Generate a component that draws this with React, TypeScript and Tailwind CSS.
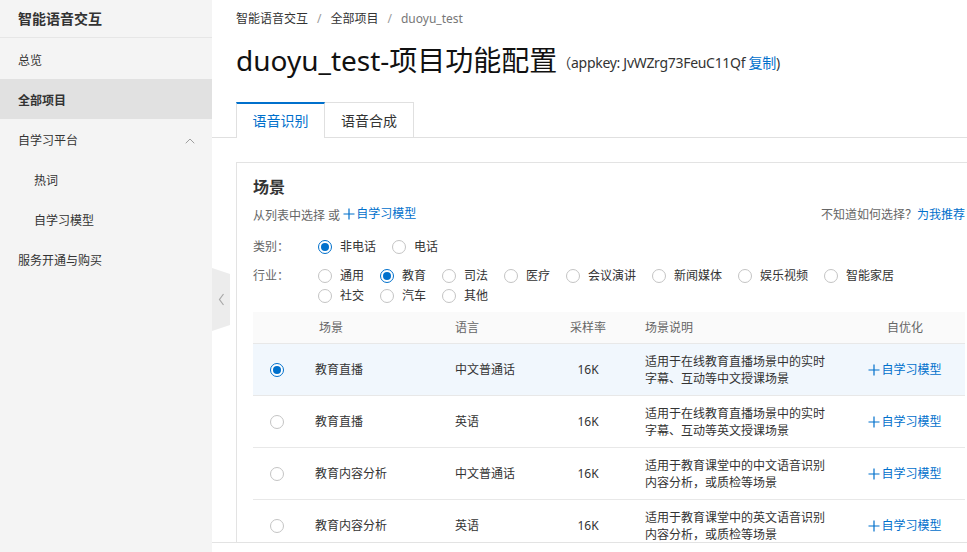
import { ChevronUp } from "lucide-react";

const font = {
	fontFamily: '"Noto Sans", "Noto Sans CJK SC", sans-serif',
};

const industries = [
	"通用",
	"教育",
	"司法",
	"医疗",
	"会议演讲",
	"新闻媒体",
	"娱乐视频",
	"智能家居",
	"社交",
	"汽车",
	"其他",
];

const rows = [
	{
		name: "教育直播",
		lang: "中文普通话",
		desc: "适用于在线教育直播场景中的实时字幕、互动等中文授课场景",
		selected: true,
	},
	{
		name: "教育直播",
		lang: "英语",
		desc: "适用于在线教育直播场景中的实时字幕、互动等英文授课场景",
		selected: false,
	},
	{
		name: "教育内容分析",
		lang: "中文普通话",
		desc: "适用于教育课堂中的中文语音识别内容分析，或质检等场景",
		selected: false,
	},
	{
		name: "教育内容分析",
		lang: "英语",
		desc: "适用于教育课堂中的英文语音识别内容分析，或质检等场景",
		selected: false,
	},
];

function Radio({ checked }: { checked?: boolean }) {
	return checked ? (
		<span className="flex h-[14px] w-[14px] shrink-0 items-center justify-center rounded-full border border-[#0070cc] bg-white">
			<span className="h-[8px] w-[8px] rounded-full bg-[#0070cc]" />
		</span>
	) : (
		<span className="h-[14px] w-[14px] shrink-0 rounded-full border border-[#c4c4c4] bg-white" />
	);
}

function PlusLink({ children }: { children: React.ReactNode }) {
	return (
		<span className="inline-flex items-center text-[#0070cc]">
			<svg width="12" height="12" viewBox="0 0 12 12" className="mr-[1px]">
				<path d="M6 0.5V11.5M0.5 6H11.5" stroke="#0070cc" strokeWidth="1.2" />
			</svg>
			{children}
		</span>
	);
}

function Sidebar() {
	const item = "flex h-10 items-center pt-1 text-xs text-[#333]";
	return (
		<div className="flex w-[212px] shrink-0 flex-col bg-[#f4f4f4]">
			<div className="flex h-[38px] items-center border-b border-[#e6e6e6] px-[18px] text-sm font-bold text-[#333]">
				智能语音交互
			</div>
			<div className="pt-[1px]">
				<div className={`${item} px-[18px]`}>总览</div>
				<div className={`${item} bg-[#e1e1e1] px-[18px] font-bold text-[#000]`}>
					全部项目
				</div>
				<div className={`${item} justify-between pl-[18px] pr-[14px]`}>
					<span>自学习平台</span>
					<ChevronUp size={16} strokeWidth={1.2} className="text-[#888]" />
				</div>
				<div className={`${item} pl-[34px]`}>热词</div>
				<div className={`${item} pl-[34px]`}>自学习模型</div>
				<div className={`${item} px-[18px]`}>服务开通与购买</div>
			</div>
		</div>
	);
}

export default function App() {
	return (
		<div
			className="relative flex h-[552px] w-[967px] overflow-hidden bg-white"
			style={font}
		>
			<Sidebar />

			{/* collapse handle */}
			<div className="absolute left-[212px] top-[268px]">
				<svg width="19" height="63" viewBox="0 0 19 63">
					<polygon points="0,0 18,6 18,57 0,63" fill="#ececec" />
					<path
						d="M11.5 26L7.5 31.5L11.5 37"
						fill="none"
						stroke="#a8a8a8"
						strokeWidth="1.2"
					/>
				</svg>
			</div>

			<div className="flex min-w-0 flex-1 flex-col">
				<div className="h-[543px] overflow-hidden border-b border-[#e3e3e3]">
					{/* breadcrumb */}
					<div className="flex h-[37px] items-center gap-[9px] px-6 text-xs text-[#333]">
						<span>智能语音交互</span>
						<span className="text-[#999]">/</span>
						<span>全部项目</span>
						<span className="text-[#999]">/</span>
						<span className="text-[#777]">duoyu_test</span>
					</div>

					{/* title */}
					<div className="flex h-[46px] items-center px-6">
						<h1 className="text-[28px] leading-none text-[#111]">
							duoyu_test-项目功能配置
						</h1>
						<span className="mt-[6px] text-sm tracking-[-0.3px] text-[#333]">
							（appkey: JvWZrg73FeuC11Qf{" "}
							<span className="text-[#0070cc]">复制</span>)
						</span>
					</div>

					{/* tabs */}
					<div className="mt-[19px] flex border-b border-[#e0e0e0] pl-6">
						<div className="mb-[-1px] flex h-[36px] w-[89px] items-center justify-center border-x border-t-2 border-[#e0e0e0] border-t-[#0070cc] bg-white text-sm text-[#0070cc]">
							语音识别
						</div>
						<div className="mb-[-1px] flex h-[36px] w-[89px] items-center justify-center border-r border-t border-[#e0e0e0] text-sm text-[#333]">
							语音合成
						</div>
					</div>

					{/* card */}
					<div className="ml-6 mt-6 w-[746px] border border-[#e3e3e3] px-4 pt-3">
						<div className="text-base font-bold leading-[24px] text-[#333]">
							场景
						</div>
						<div className="mt-[5px] flex items-center justify-between text-xs leading-5 text-[#666]">
							<span>
								从列表中选择 或 <PlusLink>自学习模型</PlusLink>
							</span>
							<span>
								不知道如何选择？<span className="text-[#0070cc]">为我推荐</span>
							</span>
						</div>

						<div className="mt-[11px] flex text-xs leading-5">
							<div className="w-[65px] text-[#666]">类别：</div>
							<div className="flex items-center">
								<span className="mr-4 flex items-center gap-2 text-[#333]">
									<Radio checked />
									非电话
								</span>
								<span className="flex items-center gap-2 text-[#333]">
									<Radio />
									电话
								</span>
							</div>
						</div>

						<div className="mt-[9px] flex text-xs leading-5">
							<div className="w-[65px] text-[#666]">行业：</div>
							<div className="flex w-[600px] flex-wrap">
								{industries.map((name) => (
									<span
										key={name}
										className="mr-4 flex items-center gap-2 text-[#333]"
									>
										<Radio checked={name === "教育"} />
										{name}
									</span>
								))}
							</div>
						</div>

						{/* table */}
						<div className="mt-[6px] text-xs text-[#333]">
							<div className="grid h-[32px] grid-cols-[47px_140px_110px_76px_229px_100px_1fr] items-center border-b border-[#e8e8e8] bg-[#fafafa] text-[#666]">
								<span />
								<span className="pl-[19px]">场景</span>
								<span className="pl-[15px]">语言</span>
								<span className="text-center">采样率</span>
								<span className="pl-[19px]">场景说明</span>
								<span className="text-center">自优化</span>
								<span />
							</div>
							{rows.map((r, i) => (
								<div
									key={i}
									className={`grid h-[52px] grid-cols-[47px_140px_110px_76px_229px_100px_1fr] items-center border-b border-[#e8e8e8] ${
										r.selected ? "bg-[#f1f7fd]" : ""
									}`}
								>
									<span className="flex justify-center">
										<Radio checked={r.selected} />
									</span>
									<span className="pl-[15px]">{r.name}</span>
									<span className="pl-[15px]">{r.lang}</span>
									<span className="text-center">16K</span>
									<span className="w-[204px] pl-[19px] leading-[17px]">
										{r.desc}
									</span>
									<span className="flex justify-center">
										<PlusLink>自学习模型</PlusLink>
									</span>
									<span />
								</div>
							))}
						</div>
					</div>
				</div>
			</div>
		</div>
	);
}
